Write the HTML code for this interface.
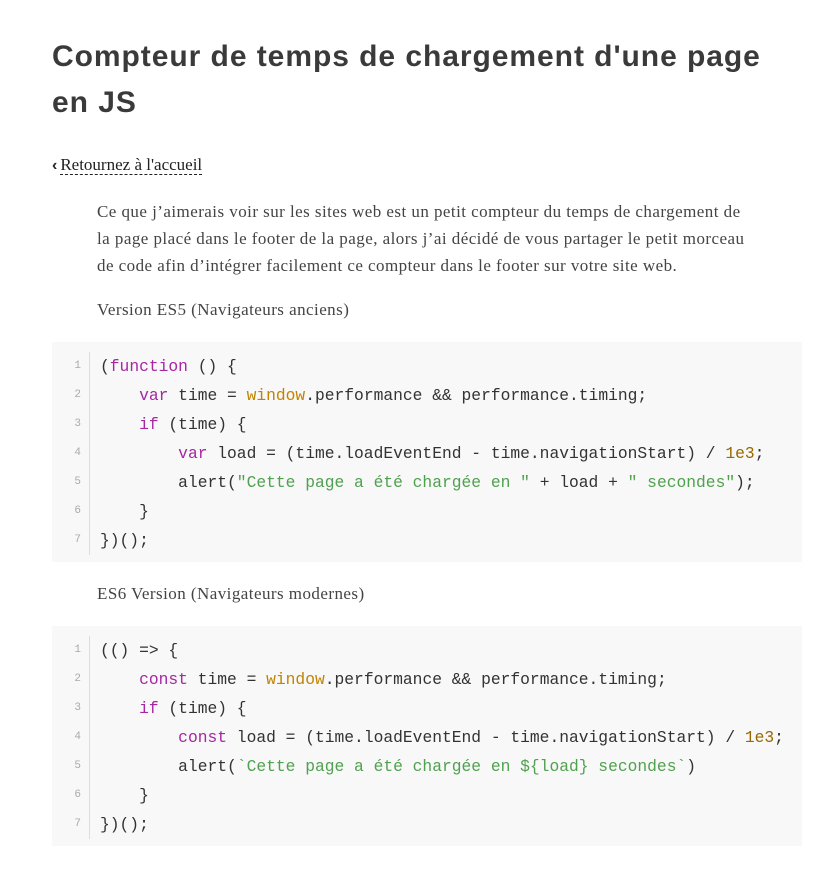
<!DOCTYPE html>
<html><head><meta charset="utf-8"><style>
body{margin:0;background:#fff;width:828px;height:884px;overflow:hidden}
h1{position:absolute;left:52px;top:34px;margin:0;width:740px;font:bold 30px/46px "Liberation Sans",sans-serif;color:#3a3a3a;letter-spacing:0.95px}
.back{position:absolute;left:52px;top:154px;font:17px/22px "Liberation Serif",serif;color:#222}
.back b{font:bold 16px "Liberation Sans",sans-serif;margin-right:3px}
.back span{border-bottom:1px dashed #222}
.p{position:absolute;left:97px;font:17px/27px "Liberation Serif",serif;color:#444;white-space:nowrap;letter-spacing:0.45px}
.code{position:absolute;left:52px;width:750px;height:220px;background:#f8f8f8}
.ln{position:absolute;left:0;top:10px;border-right:1px solid #ddd;text-align:right;padding-right:8px;box-sizing:border-box;width:38px;font:11px/29px "Liberation Mono",monospace;color:#aaa}
pre{position:absolute;left:48px;top:10px;margin:0;font:16.3px/29px "Liberation Mono",monospace;color:#333}
.k{color:#a626a4}.w{color:#c18401}.s{color:#50a14f}.n{color:#986801}
</style></head><body>
<h1>Compteur de temps de chargement d'une page en JS</h1>
<div class="back"><b>‹</b><span>Retournez à l'accueil</span></div>
<div class="p" style="top:198px">Ce que j’aimerais voir sur les sites web est un petit compteur du temps de chargement de<br>la page placé dans le footer de la page, alors j’ai décidé de vous partager le petit morceau<br>de code afin d’intégrer facilement ce compteur dans le footer sur votre site web.</div>
<div class="p" style="top:296px">Version ES5 (Navigateurs anciens)</div>
<div class="code" style="top:342px"><div class="ln"><div>1</div><div>2</div><div>3</div><div>4</div><div>5</div><div>6</div><div>7</div></div>
<pre>(<span class="k">function</span> () {
    <span class="k">var</span> time = <span class="w">window</span>.performance &amp;&amp; performance.timing;
    <span class="k">if</span> (time) {
        <span class="k">var</span> load = (time.loadEventEnd - time.navigationStart) / <span class="n">1e3</span>;
        alert(<span class="s">"Cette page a été chargée en "</span> + load + <span class="s">" secondes"</span>);
    }
})();</pre></div>
<div class="p" style="top:580px">ES6 Version (Navigateurs modernes)</div>
<div class="code" style="top:626px"><div class="ln"><div>1</div><div>2</div><div>3</div><div>4</div><div>5</div><div>6</div><div>7</div></div>
<pre>(() =&gt; {
    <span class="k">const</span> time = <span class="w">window</span>.performance &amp;&amp; performance.timing;
    <span class="k">if</span> (time) {
        <span class="k">const</span> load = (time.loadEventEnd - time.navigationStart) / <span class="n">1e3</span>;
        alert(<span class="s">`Cette page a été chargée en ${load} secondes`</span>)
    }
})();</pre></div>
</body></html>
